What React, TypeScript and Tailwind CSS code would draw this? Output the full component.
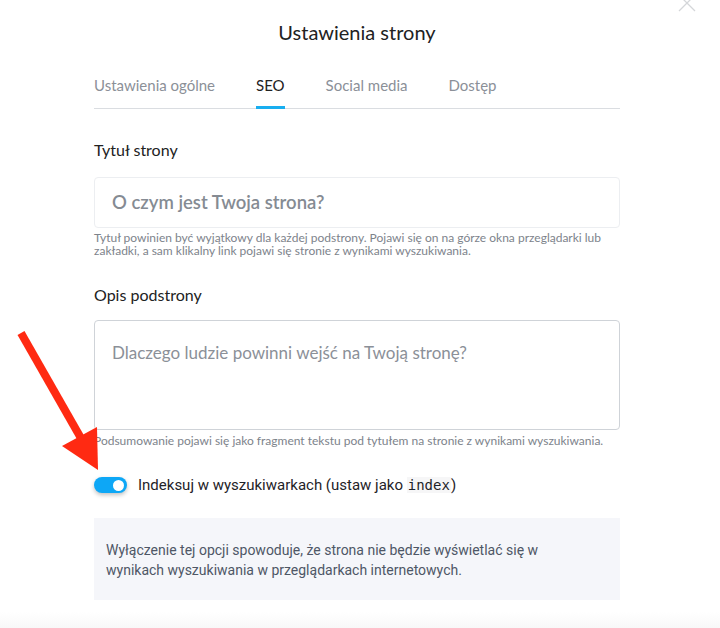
import React from 'react';

const tabs = ['Ustawienia ogólne', 'SEO', 'Social media', 'Dostęp'];

export default function App() {
  const [indexOn, setIndexOn] = React.useState(true);

  return (
    <div className="relative w-[720px] h-[628px] overflow-hidden bg-white font-['Lato','Noto_Sans',sans-serif] text-[#1f2328]">
      {/* close */}
      <svg className="absolute left-[678px] top-[-6px] w-[18px] h-[18px]" viewBox="0 0 18 18">
        <path d="M1 1 L17 17 M17 1 L1 17" stroke="#d4d6d9" strokeWidth="1.3" fill="none" />
      </svg>

      <div className="ml-[94px] w-[526px] pt-[18px]">
        <h1 className="text-center text-[20px] leading-[28px] font-normal text-[#222]">Ustawienia strony</h1>

        {/* Tabs */}
        <div className="mt-[29px] flex gap-[41px] border-b border-[#dadde1]">
          {tabs.map((t) => (
            <button
              key={t}
              className={
                t === 'SEO'
                  ? 'text-[15px] leading-[20px] pb-[11px] -mb-px border-b-[3px] border-[#18aef0] text-[#222]'
                  : 'text-[15px] leading-[20px] pb-[11px] -mb-px border-b-[3px] border-transparent text-[#8b9098]'
              }
            >
              {t}
            </button>
          ))}
        </div>

        {/* Title */}
        <div className="mt-[29px] text-[16px] leading-[24px] text-[#222]">Tytuł strony</div>
        <div className="mt-[15px] h-[51px] rounded-[4px] border border-[#eceef1] flex items-center pl-[17px]">
          <span className="text-[18.5px] font-semibold text-[#858b93]">O czym jest Twoja strona?</span>
        </div>
        <p className="mt-[3px] text-[12px] leading-[13px] text-[#7d838b]">
          Tytuł powinien być wyjątkowy dla każdej podstrony. Pojawi się on na górze okna przeglądarki lub zakładki, a sam klikalny link pojawi się stronie z wynikami wyszukiwania.
        </p>

        {/* Description */}
        <div className="mt-[26px] text-[16px] leading-[24px] text-[#222]">Opis podstrony</div>
        <div className="mt-[13px] h-[110px] rounded-[4px] border border-[#cfd3d8] pl-[17px] pt-[20px]">
          <span className="text-[17px] leading-[24px] text-[#8b9098]">Dlaczego ludzie powinni wejść na Twoją stronę?</span>
        </div>
        <p className="mt-[4px] text-[12px] leading-[13px] text-[#7d838b]">
          Podsumowanie pojawi się jako fragment tekstu pod tytułem na stronie z wynikami wyszukiwania.
        </p>

        {/* Toggle */}
        <div className="mt-[28px] flex items-center h-[20px] font-['Roboto',sans-serif]">
          <button
            onClick={() => setIndexOn(!indexOn)}
            className={
              indexOn
                ? 'w-[33px] h-[16px] rounded-full bg-[#0da7f6] flex items-center justify-end pr-[3px] shadow-[0_2px_4px_rgba(0,0,0,0.25)]'
                : 'w-[33px] h-[16px] rounded-full bg-[#c9cdd2] flex items-center justify-start pl-[3px] shadow-[0_2px_4px_rgba(0,0,0,0.25)]'
            }
          >
            <span className="w-[11px] h-[11px] rounded-full bg-white" />
          </button>
          <span className="ml-[11px] text-[15px] text-[#1f2328]">
            Indeksuj w wyszukiwarkach (ustaw jako{' '}
            <code className="font-['DejaVu_Sans_Mono',monospace] text-[14px] bg-[#f6f6f7] px-[1px]">index</code>)
          </span>
        </div>

        {/* Info */}
        <div className="mt-[23px] h-[82px] bg-[#f5f6fa] pl-[12px] pt-[22px] pr-[40px] font-['Roboto',sans-serif] text-[14px] leading-[20px] text-[#4e5766]">
          Wyłączenie tej opcji spowoduje, że strona nie będzie wyświetlać się w wynikach wyszukiwania w przeglądarkach internetowych.
        </div>
      </div>

      {/* footer fade */}
      <div className="absolute left-0 bottom-0 w-full h-[16px] bg-gradient-to-b from-white to-[#f8f8f8]" />

      {/* red annotation arrow */}
      <svg className="absolute left-0 top-0 w-[720px] h-[628px] pointer-events-none" viewBox="0 0 720 628">
        <line x1="21" y1="333" x2="82" y2="440" stroke="#ff2a12" strokeWidth="8" />
        <polygon points="62,446 97,427 98,470" fill="#ff2a12" />
      </svg>
    </div>
  );
}
